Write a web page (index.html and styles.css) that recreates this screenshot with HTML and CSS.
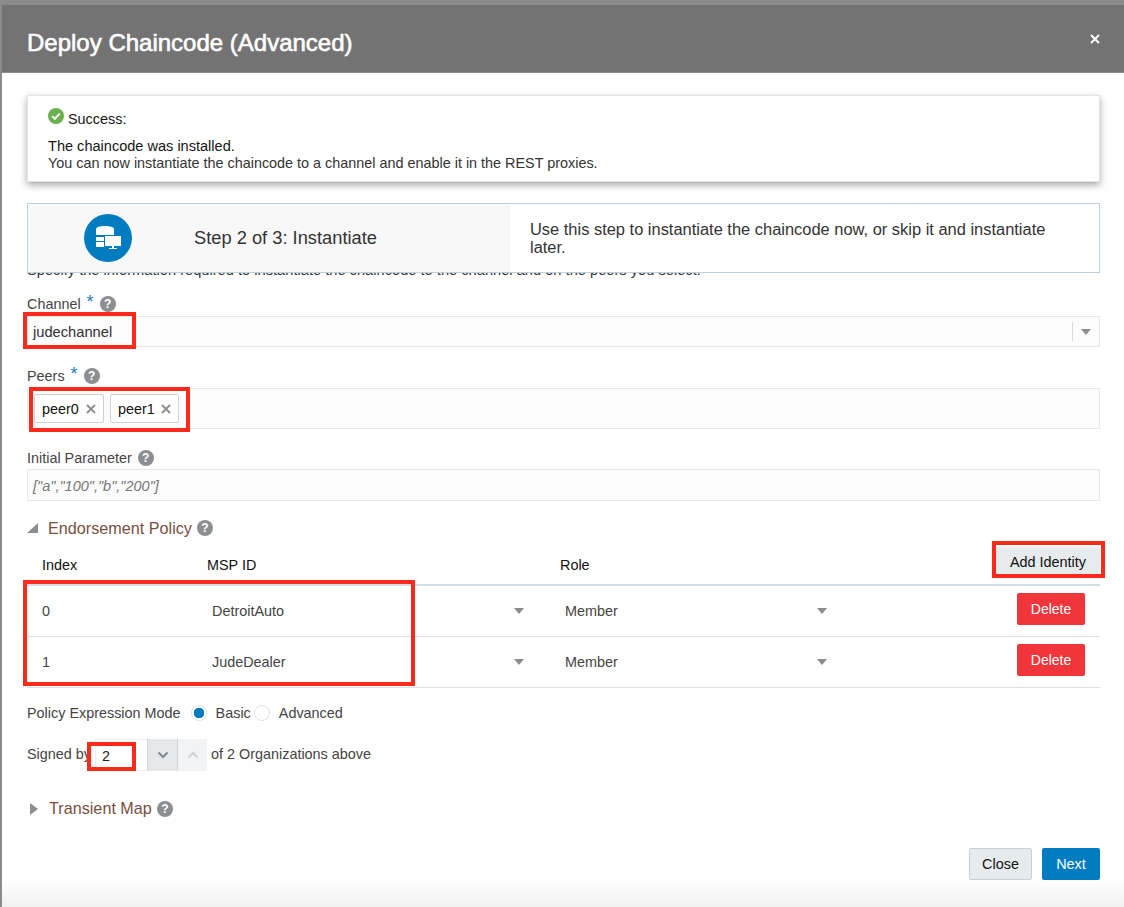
FILE: index.html
```html
<!DOCTYPE html>
<html lang="en">

<head>
    <meta charset="UTF-8">
    <meta name="viewport" content="width=device-width, initial-scale=1.0">
    <title>Deploy Chaincode (Advanced)</title>
    <link rel="stylesheet" href="styles.css">
</head>

<body>
    <div class="dialog">
        <div class="dialog-header">
            <h1>Deploy Chaincode (Advanced)</h1>
            <svg class="close-x" width="10" height="10" viewBox="0 0 10 10"><path d="M1 1l8 8M9 1l-8 8" stroke="#fff" stroke-width="2"/></svg>
        </div>

        <div class="dialog-body">
            <!-- Success message -->
            <div class="alert">
                <div class="alert-title">
                    <svg width="16" height="16" viewBox="0 0 16 16"><circle cx="8" cy="8" r="8" fill="#6cb14f"/><path d="M4.2 8.2l2.7 2.6 4.8-5.2" fill="none" stroke="#fff" stroke-width="2"/></svg>
                    <span>Success:</span>
                </div>
                <p class="alert-main">The chaincode was installed.</p>
                <p class="alert-sub">You can now instantiate the chaincode to a channel and enable it in the REST proxies.</p>
            </div>

            <!-- Step banner -->
            <div class="step">
                <div class="step-left">
                    <div class="step-icon">
                        <svg width="26" height="26" viewBox="0 0 26 26">
                            <path d="M1 4C1 2 5 1 10 1S19 2 19 4V10H1z" fill="#fff"/>
                            <rect x="1" y="12" width="8" height="4" fill="#fff"/>
                            <rect x="1" y="17" width="8" height="5" fill="#fff"/>
                            <rect x="10" y="11" width="16" height="10" fill="#fff"/>
                            <rect x="17" y="21" width="2" height="2" fill="#fff"/>
                            <rect x="14" y="23" width="8" height="1" fill="#fff"/>
                        </svg>
                    </div>
                    <div class="step-title">Step 2 of 3: Instantiate</div>
                </div>
                <div class="step-text">Use this step to instantiate the chaincode now, or skip it and instantiate later.</div>
            </div>

            <div class="intro"><span>Specify the information required to instantiate the chaincode to the channel and on the peers you select.</span></div>

            <!-- Form -->
            <div class="field field-channel">
                <div class="label">Channel <span class="req">*</span><span class="help">?</span></div>
                <div class="input input-select">
                    <span>judechannel</span>
                    <span class="select-btn"><i class="caret"></i></span>
                </div>
            </div>

            <div class="field field-peers">
                <div class="label">Peers <span class="req">*</span><span class="help">?</span></div>
                <div class="input input-chips">
                    <span class="chip">peer0 <svg width="10" height="10" viewBox="0 0 10 10"><path d="M1 1l8 8M9 1l-8 8" stroke="#8a8d8f" stroke-width="1.800"/></svg></span>
                    <span class="chip">peer1 <svg width="10" height="10" viewBox="0 0 10 10"><path d="M1 1l8 8M9 1l-8 8" stroke="#8a8d8f" stroke-width="1.800"/></svg></span>
                </div>
            </div>

            <div class="field field-param">
                <div class="label">Initial Parameter <span class="help">?</span></div>
                <div class="input input-placeholder">["a","100","b","200"]</div>
            </div>

            <div class="section-head section-open">
                <i class="tri-open"></i><span>Endorsement Policy</span><span class="help">?</span>
            </div>

            <table class="policy">
                <thead>
                    <tr>
                        <th class="col-index">Index</th>
                        <th class="col-msp">MSP ID</th>
                        <th class="col-role">Role</th>
                        <th class="col-action"><button class="btn btn-add">Add Identity</button></th>
                    </tr>
                </thead>
                <tbody>
                    <tr>
                        <td>0</td>
                        <td><div class="cell-select"><span>DetroitAuto</span><i class="caret"></i></div></td>
                        <td><div class="cell-select"><span>Member</span><i class="caret"></i></div></td>
                        <td class="cell-action"><button class="btn btn-delete">Delete</button></td>
                    </tr>
                    <tr>
                        <td>1</td>
                        <td><div class="cell-select"><span>JudeDealer</span><i class="caret"></i></div></td>
                        <td><div class="cell-select"><span>Member</span><i class="caret"></i></div></td>
                        <td class="cell-action"><button class="btn btn-delete">Delete</button></td>
                    </tr>
                </tbody>
            </table>

            <div class="mode">
                <span>Policy Expression Mode</span>
                <span class="radio radio-on"></span><span class="radio-label">Basic</span>
                <span class="radio"></span><span class="radio-label">Advanced</span>
            </div>

            <div class="signed">
                <span>Signed by</span>
                <div class="spinner">
                    <span class="spinner-value">2</span>
                    <span class="spin-btn spin-down"><svg width="12" height="8" viewBox="0 0 12 8"><path d="M1.500 1.500L6 6l4.500-4.500" fill="none" stroke="#7d8a94" stroke-width="2"/></svg></span>
                    <span class="spin-btn spin-up"><svg width="12" height="8" viewBox="0 0 12 8"><path d="M1.500 6.500L6 2l4.500 4.500" fill="none" stroke="#ccd2d6" stroke-width="2"/></svg></span>
                </div>
                <span>of 2 Organizations above</span>
            </div>

            <div class="section-head section-closed">
                <i class="tri-closed"></i><span>Transient Map</span><span class="help">?</span>
            </div>

            <div class="footer">
                <button class="btn btn-close">Close</button>
                <button class="btn btn-next">Next</button>
            </div>
        </div>

        <!-- Red annotation boxes drawn on top of the screenshot -->
        <div class="mark mark-channel"></div>
        <div class="mark mark-peers"></div>
        <div class="mark mark-add"></div>
        <div class="mark mark-table"></div>
        <div class="mark mark-signed"></div>
    </div>
</body>
</html>
```

FILE: styles.css
```css
* {
    box-sizing: border-box;
}

html,
body {
    margin: 0;
    height: 907px;
    overflow: hidden;
}

body {
    font-family: "Liberation Sans", Arial, sans-serif;
    font-size: 14.400px;
    color: #333;
    background-color: #8a8b8d;
    padding: 5px 0 0 2px;
}

.dialog {
    position: relative;
    height: 902px;
    background: linear-gradient(to bottom, #fff 875px, #f1f1f1 902px);
}

.dialog-header {
    height: 68px;
    background-color: #737373;
    border-bottom: 1px solid #8d8d8d;
    display: flex;
    justify-content: space-between;
    padding: 0 24px 0 25px;
}

.dialog-header h1 {
    margin: 23px 0 0;
    font-size: 24px;
    line-height: 30px;
    font-weight: normal;
    color: #fff;
    -webkit-text-stroke: 0.600px #fff;
}

.close-x {
    margin-top: 29px;
}

.dialog-body {
    padding: 22px 24px 0 25px;
}

.alert {
    height: 87px;
    padding: 12px 20px 0 20px;
    border: 1px solid #e4e4e4;
    box-shadow: 0 3px 7px rgba(0, 0, 0, 0.35);
    background: #fff;
    color: #161616;
}

.alert-title {
    display: flex;
    align-items: flex-start;
    height: 22px;
}

.alert-title span {
    margin: 3px 0 0 4px;
}

.alert p {
    margin: 0;
    line-height: 17px;
}

.alert-main {
    padding-top: 8px;
    font-size: 14.550px;
}

.alert-sub {
    color: #333;
}

.step {
    position: relative;
    display: flex;
    height: 70px;
    margin-top: 21px;
    border: 1px solid #bfcfdb;
    background: #fff;
}

.step-left {
    display: flex;
    align-items: center;
    width: 482px;
    background-color: #f8f8f8;
    padding-left: 56px;
}

.step-icon {
    width: 48px;
    height: 48px;
    border-radius: 50%;
    background-color: #017cc1;
    display: flex;
    align-items: center;
    justify-content: center;
}

.step-title {
    margin-left: 62px;
    font-size: 18.300px;
}

.step-text {
    flex: 1;
    padding: 16px 40px 0 20px;
    font-size: 16.450px;
    line-height: 18px;
}

.intro {
    height: 6px;
    overflow: hidden;
    display: flex;
    align-items: flex-end;
    font-size: 14.660px;
    line-height: 17px;
}

.intro span {
    display: block;
    flex-shrink: 0;
}

.label {
    display: flex;
    align-items: center;
    height: 18px;
    color: #444;
}

.req {
    color: #1d7db8;
    font-size: 18px;
    margin: 0 6px 0 6px;
    position: relative;
    top: -2px;
}

.help {
    display: inline-flex;
    align-items: center;
    justify-content: center;
    width: 16px;
    height: 16px;
    border-radius: 50%;
    background-color: #8c8f91;
    color: #fff;
    font-size: 12px;
    font-weight: bold;
    line-height: 16px;
}

.field-param .help {
    margin-left: 6px;
}

.input {
    border: 1px solid #e6e8e9;
    background-color: #fcfcfc;
    color: #333;
}

.field-channel {
    margin-top: 16px;
}

.input-select {
    display: flex;
    justify-content: space-between;
    align-items: center;
    height: 31px;
    margin-top: 3px;
    padding-left: 5px;
    font-size: 14.700px;
}

.select-btn {
    display: flex;
    align-items: center;
    justify-content: center;
    width: 27px;
    height: 19px;
    border-left: 1px solid #d8dbdd;
}

.caret {
    display: inline-block;
    width: 0;
    height: 0;
    border-left: 5px solid transparent;
    border-right: 5px solid transparent;
    border-top: 6px solid #8a8d8f;
}

.field-peers {
    margin-top: 20px;
}

.input-chips {
    display: flex;
    gap: 6px;
    height: 41px;
    margin-top: 3px;
    padding: 5px 6px;
}

.chip {
    display: flex;
    align-items: center;
    justify-content: space-between;
    height: 29px;
    padding: 0 7px;
    border: 1px solid #ccd2d6;
    border-radius: 2px;
    background: #fff;
    color: #111;
}

.chip:first-child {
    width: 70px;
}

.chip:last-child {
    width: 69px;
}

.field-param {
    margin-top: 20px;
}

.input-placeholder {
    height: 32px;
    margin-top: 2px;
    padding-left: 5px;
    line-height: 32px;
    font-style: italic;
    color: #777;
    font-size: 14.500px;
}

.section-head {
    display: flex;
    align-items: center;
    height: 20px;
    font-size: 16.200px;
    color: #7a4f42;
}

.section-head .help {
    margin-left: 5px;
}

.section-open {
    margin-top: 17px;
}

.tri-open {
    width: 0;
    height: 0;
    margin-right: 10px;
    border-left: 11px solid transparent;
    border-bottom: 10px solid #8c8f91;
}

.tri-closed {
    width: 0;
    height: 0;
    margin: 0 11px 0 3px;
    border-top: 6px solid transparent;
    border-bottom: 6px solid transparent;
    border-left: 8px solid #8c8f91;
}

.policy {
    width: 100%;
    border-collapse: collapse;
    table-layout: fixed;
}

.policy th {
    height: 47px;
    padding: 8px 0 0;
    font-weight: normal;
    text-align: left;
    color: #111;
    border-bottom: 2px solid #d3dfe6;
}

.col-index {
    width: 180px;
    padding-left: 15px !important;
}

.col-msp {
    width: 353px;
}

.col-role {
    width: 303px;
}

.col-action {
    text-align: right !important;
    vertical-align: top;
}

.policy td {
    height: 51px;
    padding: 0;
    color: #444;
    border-bottom: 1px solid #dfe2e3;
}

.policy td:first-child {
    padding-left: 15px;
}

.cell-select {
    display: flex;
    justify-content: space-between;
    align-items: center;
    padding-left: 5px;
    margin-right: 36px;
}

.cell-action {
    text-align: right;
    padding: 0 15px 4px 0 !important;
}

.btn {
    font-family: inherit;
    font-size: 14.400px;
    border-radius: 2px;
    cursor: pointer;
}

.btn-add {
    display: block;
    width: 104px;
    height: 29px;
    margin: 1px 0 0 auto;
    border: none;
    background-color: #e8ebed;
    color: #111;
}

.btn-delete {
    width: 68px;
    height: 32px;
    border: none;
    background-color: #f0353b;
    color: #fff;
    font-size: 14px;
    vertical-align: top;
}

.mode {
    display: flex;
    align-items: center;
    height: 18px;
    margin-top: 16px;
    color: #444;
}

.radio {
    width: 16px;
    height: 16px;
    margin-left: 10px;
    border: 1px solid #dfe2e3;
    border-radius: 50%;
    background: #fff;
}

.radio-on {
    background: radial-gradient(circle, #017cc1 0 5px, #fff 5.500px);
}

.radio + .radio-label {
    margin-left: 9px;
}

.radio-label + .radio {
    margin-left: 3px;
}

.signed {
    display: flex;
    align-items: center;
    height: 32px;
    margin-top: 16px;
    color: #444;
}

.spinner {
    display: flex;
    height: 32px;
    margin: 2px 4px 0;
}

.spinner-value {
    width: 52px;
    padding-left: 6px;
    line-height: 33px;
    border: 1px solid #eef0f1;
    border-right: none;
    color: #222;
}

.spin-btn {
    display: flex;
    align-items: center;
    justify-content: center;
    width: 30px;
    border-left: 1px solid #cfd6da;
}

.spin-down {
    background-color: #e4e8eb;
}

.spin-up {
    background-color: #f1f3f4;
}

.section-closed {
    margin-top: 29px;
}

.footer {
    display: flex;
    justify-content: flex-end;
    gap: 10px;
    margin-top: 29px;
}

.btn-close {
    width: 63px;
    height: 32px;
    border: 1px solid #c4d0d8;
    background-color: #e8ebed;
    color: #111;
}

.btn-next {
    width: 58px;
    height: 32px;
    border: none;
    background-color: #017cc1;
    color: #fff;
}

.mark {
    position: absolute;
    border: 4px solid #fb2a1a;
}

.mark-channel {
    left: 21px;
    top: 307px;
    width: 113px;
    height: 37px;
}

.mark-peers {
    left: 27px;
    top: 382px;
    width: 161px;
    height: 45px;
}

.mark-add {
    left: 990px;
    top: 536px;
    width: 113px;
    height: 37px;
}

.mark-table {
    left: 21px;
    top: 575px;
    width: 392px;
    height: 106px;
}

.mark-signed {
    left: 85px;
    top: 737px;
    width: 49px;
    height: 29px;
}
```
